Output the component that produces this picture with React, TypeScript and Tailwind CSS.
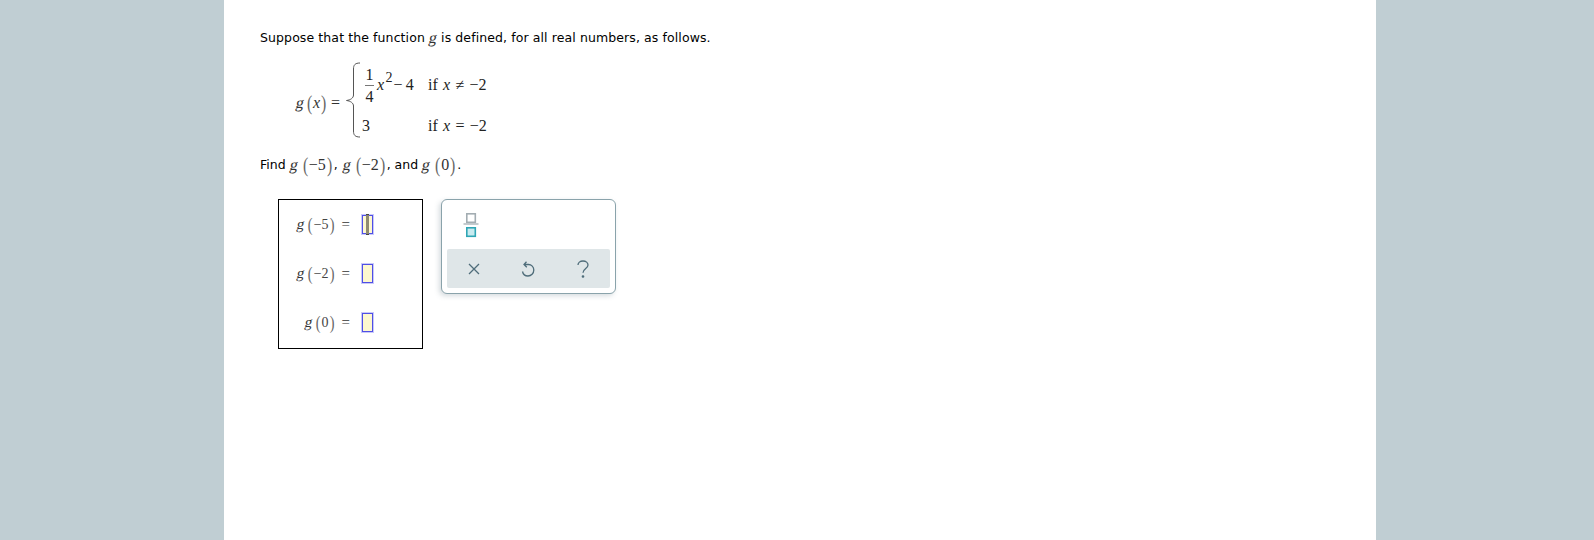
const serif = "font-['Liberation_Serif',serif]";

function Brace() {
  return (
    <svg width="14" height="76" viewBox="0 0 14 76" fill="none" stroke="#555" strokeWidth="1" className="block">
      <path d="M14 1C9 1 7.500 3 7.500 7V33C7.500 36 4.500 38 0.500 38.500C4.500 39 7.500 41 7.500 44V69C7.500 73 9 75 14 75" />
    </svg>
  );
}

function Paren({ children, size = "text-[21px]" }: { children: string; size?: string }) {
  return (
    <span className={`${size} w-[7px] flex justify-center leading-none font-light text-[#666]`}>
      <span className="inline-block scale-x-75">{children}</span>
    </span>
  );
}

function G({ size = "text-[16px]" }: { size?: string }) {
  return <span className={`${serif} ${size} inline-block -skew-x-12 leading-none text-[#333]`}>g</span>;
}

function Call({ arg }: { arg: string }) {
  return (
    <span className={`${serif} inline-flex items-center text-[16px] text-[#333]`}>
      <G />
      <span className="w-[4px]" />
      <Paren>(</Paren>
      <span>{arg}</span>
      <Paren>)</Paren>
    </span>
  );
}

function Answer({ arg, active }: { arg: string; active?: boolean }) {
  return (
    <div className="flex items-center justify-end h-[24px]">
      <span className={`${serif} inline-flex items-center text-[14px] text-[#444]`}>
        <G size="text-[15px]" />
        <span className="w-[2px]" />
        <Paren size="text-[19px]">(</Paren>
        <span>{arg}</span>
        <Paren size="text-[19px]">)</Paren>
      </span>
      <span className={`${serif} text-[15px] ml-[6px] mr-[12px] text-[#333]`}>=</span>
      <span className="relative w-[11px] h-[19px] bg-[#fdf8cf] border border-[#4f4fe6] shadow-[0_0_0_1px_rgba(120,120,240,0.4)] block mr-[49px]">
        {active && <span className="absolute left-[3px] -top-[2px] w-[3px] h-[21px] bg-[#8f8a70] border-y border-[#444]" />}
      </span>
    </div>
  );
}

function FracIcon() {
  return (
    <svg width="16" height="25" viewBox="0 0 16 25" className="block">
      <rect x="3.800" y="0.800" width="8.500" height="8.500" fill="#fff" stroke="#a3adb2" strokeWidth="1.600" />
      <rect x="0.500" y="10.500" width="15" height="1" fill="#8a979d" />
      <rect x="3.800" y="14.800" width="8.500" height="8.500" fill="#c8ebf0" stroke="#2fa6b5" strokeWidth="1.600" />
    </svg>
  );
}

export default function App() {
  return (
    <div className="flex h-[540px] overflow-hidden bg-white text-black font-['DejaVu_Sans',sans-serif]">
      <div className="w-[224px] shrink-0 bg-[#c0ced3]" />
      <main className="flex-1 pl-[36px] pt-[28px]">
        <p className="text-[12.5px] leading-[19px] h-[19px] flex items-center gap-[4px] tracking-[0.1px]">
          <span>Suppose that the function</span>
          <G />
          <span>is defined, for all real numbers, as follows.</span>
        </p>

        <div className={`${serif} flex items-start ml-[36px] mt-[15px] text-[#222] text-[16px]`}>
          <span className="w-[50px] h-[76px] flex items-center pt-[6px] text-[#333]">
            <G />
            <span className="w-[2px]" />
            <Paren>(</Paren>
            <i>x</i>
            <Paren>)</Paren>
            <span className="ml-[4px]">=</span>
          </span>
          <Brace />
          <div className="ml-[2px] grid grid-cols-[66px_auto] gap-y-[8px] items-center">
            <div className="flex items-center h-[46px] whitespace-nowrap">
              <span className="flex flex-col items-center leading-[15px] w-[9px] ml-[3px] mr-[3px]">
                <span>1</span>
                <span className="w-[9px] h-[1px] bg-[#777] my-[3px]" />
                <span>4</span>
              </span>
              <i>x</i>
              <span className="text-[14px] leading-none -mt-[14px] ml-[1.500px]">2</span>
              <span className="ml-[1px] [word-spacing:-1px]">− 4</span>
            </div>
            <div className="whitespace-nowrap [word-spacing:1.300px]">if <i>x</i> ≠ −2</div>
            <div className="h-[19px] leading-[19px]">3</div>
            <div className="whitespace-nowrap leading-[19px] [word-spacing:1.300px]">if <i>x</i> = −2</div>
          </div>
        </div>

        <p className="text-[12.5px] leading-[24px] h-[24px] flex items-center mt-[15px]">
          <span className="mr-[4px]">Find</span>
          <Call arg="−5" />
          <span className="ml-[1px] mr-[5px]">,</span>
          <Call arg="−2" />
          <span className="ml-[1px] mr-[4px] whitespace-pre">, and</span>
          <Call arg="0" />
          <span className="ml-[1px]">.</span>
        </p>

        <div className="flex items-start gap-[18px] ml-[18px] mt-[22px]">
          <div className="w-[145px] h-[150px] border border-black flex flex-col gap-[25px] py-[12px]">
            <Answer arg="−5" active />
            <Answer arg="−2" />
            <Answer arg="0" />
          </div>
          <div className="w-[175px] h-[95px] rounded-[6px] border border-[#8aa3ab] bg-white shadow-[-2px_2px_5px_rgba(120,140,150,0.3)] p-[5px] flex flex-col justify-between">
            <div className="pl-[16px] pt-[8px]"><FracIcon /></div>
            <div className="h-[39px] pt-[1px] bg-[#dfe6e8] rounded-[2px] grid grid-cols-3 items-center justify-items-center text-[#4f6d7a]">
              <svg width="12" height="12" viewBox="0 0 12 12" fill="none" stroke="currentColor" strokeWidth="1.300"><path d="M1 1L11 11M11 1L1 11" /></svg>
              <svg width="14" height="16" viewBox="0 0 14 16" fill="none" stroke="currentColor" strokeWidth="1.300"><path d="M5.500 0.800L3 3.500L5.800 6.300M3 3.500H7.500C10.500 3.500 12.800 6 12.800 9C12.800 12.500 10.200 15 7 15C4.300 15 2 13 1.500 10.500" /></svg>
              <svg width="12" height="18" viewBox="0 0 12 18" fill="none" stroke="currentColor" strokeWidth="1.300"><path d="M1 5C1 2.800 3 1 6 1C9 1 11 2.800 11 5C11 8.500 6 8.500 6 12.800" /><circle cx="6" cy="16.500" r="0.700" /></svg>
            </div>
          </div>
        </div>
      </main>
      <div className="w-[218px] shrink-0 bg-[#c0ced3]" />
    </div>
  );
}
